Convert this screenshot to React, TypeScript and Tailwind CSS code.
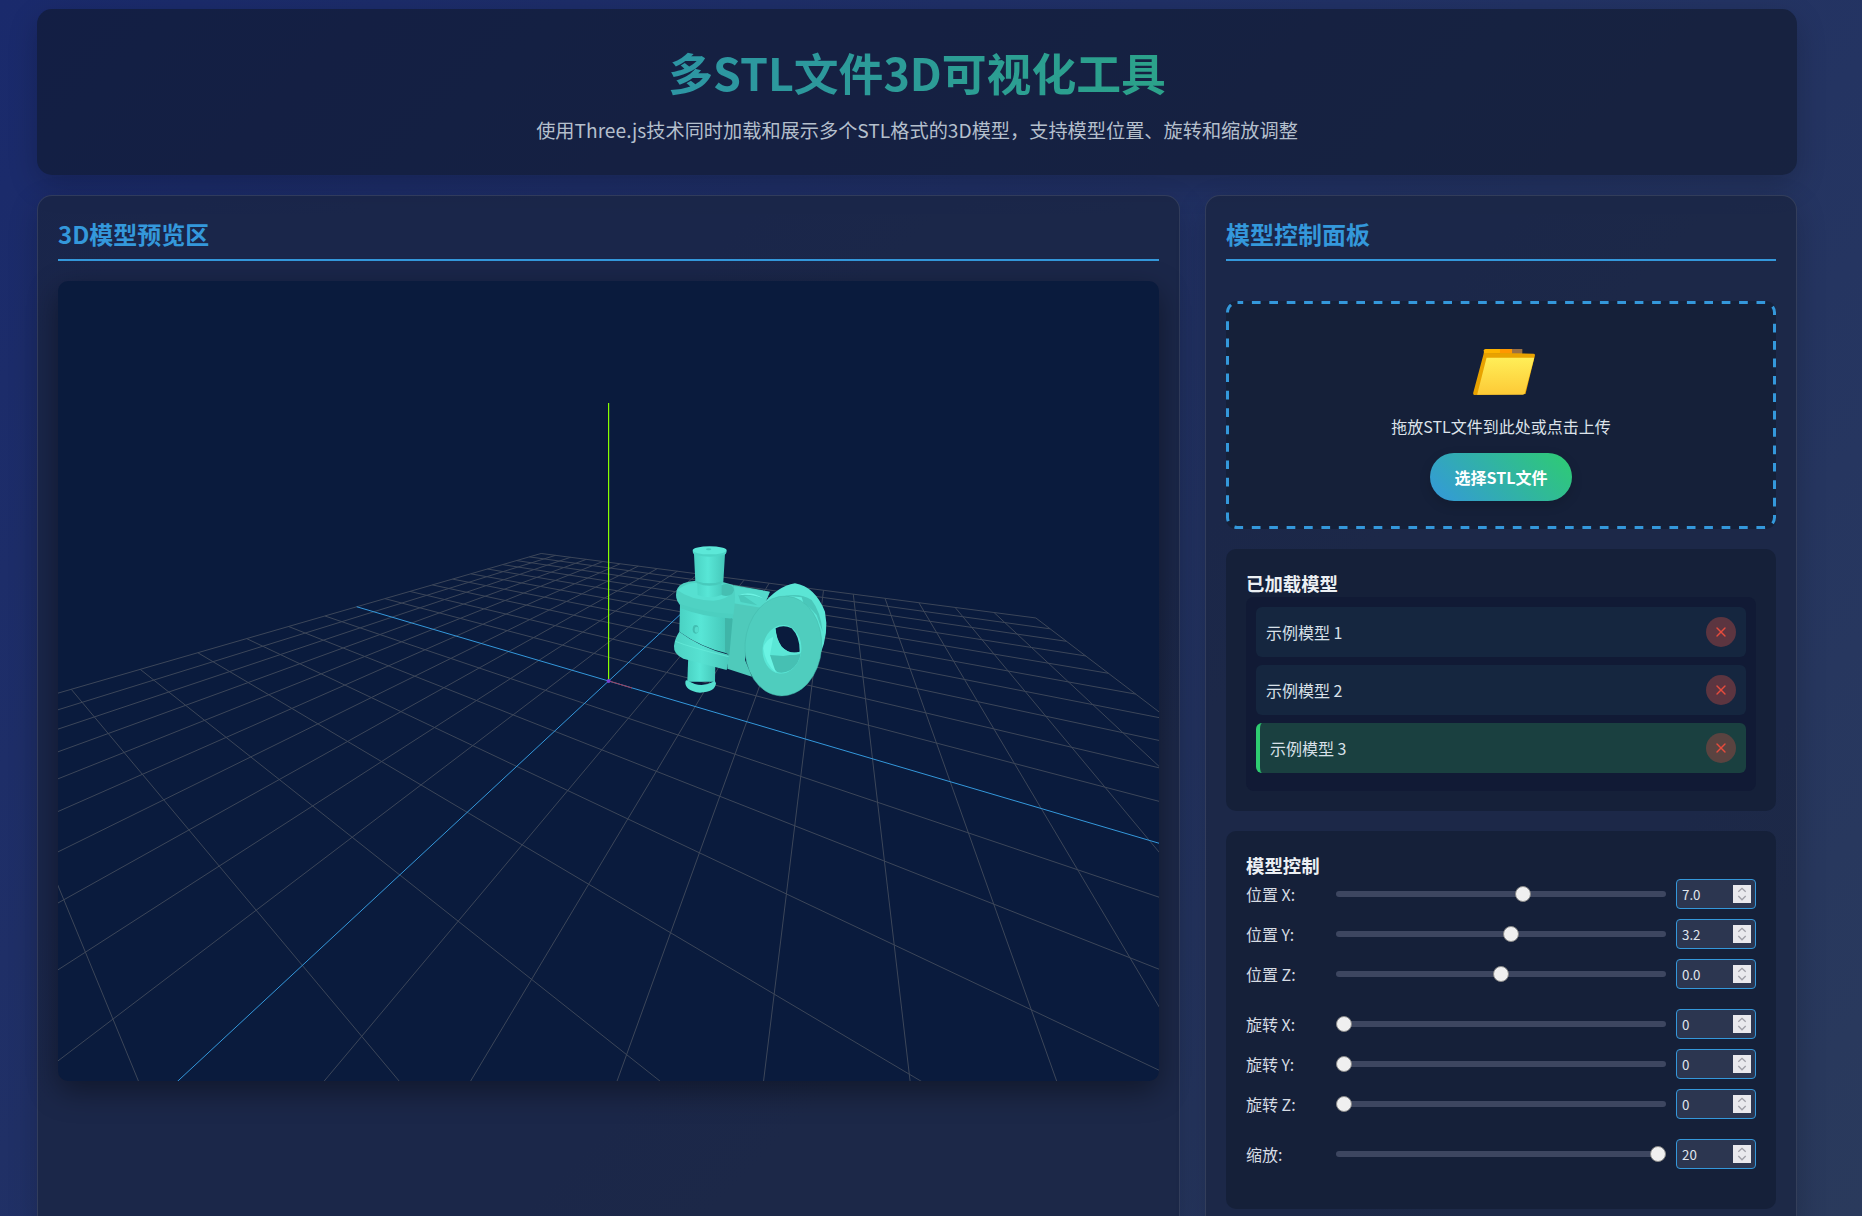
import React from 'react';
import { X } from 'lucide-react';

// ground plane of the preview, projected from the reference's vanishing points
const VA = [-114, 468];
const VB = [838.5, 467.5];
const O = [608.6, 681];
const A = -0.535;
const B = -0.952;
const OFFSET_X = 58;
const OFFSET_Y = 281;

const project = (u: number, v: number) => {
  const w = 1 + A * u + B * v;
  const x = (A * u * VA[0] + B * v * VB[0] + O[0]) / w;
  const y = (A * u * VA[1] + B * v * VB[1] + O[1]) / w;
  return [x - OFFSET_X, y - OFFSET_Y];
};

const weight = (u: number, v: number) => 1 + A * u + B * v;

// cut a grid line where it goes behind the camera
const gridLine = (u0: number, v0: number, u1: number, v1: number) => {
  let a = [u0, v0];
  let b = [u1, v1];
  const eps = 0.02;
  const wa = weight(a[0], a[1]);
  const wb = weight(b[0], b[1]);
  if (wa < eps && wb < eps) return null;
  if (wa < eps) {
    const t = (eps - wa) / (wb - wa);
    a = [a[0] + (b[0] - a[0]) * t, a[1] + (b[1] - a[1]) * t];
  }
  if (wb < eps) {
    const t = (eps - wb) / (wa - wb);
    b = [b[0] + (a[0] - b[0]) * t, b[1] + (a[1] - b[1]) * t];
  }
  const p = project(a[0], a[1]);
  const q = project(b[0], b[1]);
  return { x1: p[0], y1: p[1], x2: q[0], y2: q[1] };
};

const divisions = Array.from({ length: 21 }, (_, i) => -1 + i / 10);

// traced at 3x, origin at 670,540 of the page
const Model = () => (
  <g transform={`translate(${670 - OFFSET_X} ${540 - OFFSET_Y}) scale(0.3333)`}>
    <defs>
      <linearGradient id="shaft" x1="0" y1="0" x2="1" y2="0">
        <stop offset="0" stopColor="#4ad2c3" />
        <stop offset="0.45" stopColor="#58e6d6" />
        <stop offset="1" stopColor="#45c7b9" />
      </linearGradient>
      <linearGradient id="body" x1="0" y1="0" x2="1" y2="0">
        <stop offset="0" stopColor="#4dd2c3" />
        <stop offset="0.5" stopColor="#57e2d2" />
        <stop offset="1" stopColor="#4ac9bb" />
      </linearGradient>
    </defs>
    {/* lower pin */}
    <path d="M55 345 L52 425 L135 425 L136 370 Z" fill="url(#shaft)" />
    <path d="M46 425 Q44 452 90 458 Q136 456 138 430 Q134 418 130 425 Q92 446 54 422 Q48 418 46 425 Z" fill="#55e0d0" />
    {/* arm running to the disc */}
    <path d="M190 135 L300 155 L280 205 L235 270 L225 360 L246 410 L172 386 L185 235 Z" fill="#4fcabb" />
    <path d="M190 138 L298 156 L278 204 L190 190 Z" fill="#54dacb" />
    <path d="M205 166 Q240 150 282 176 Q250 164 222 168 L262 196 L212 186 Z" fill="#4ac9bb" />
    <path d="M205 166 Q240 150 282 176 Q240 160 205 166 Z" fill="#6cf3e3" />
    {/* clevis, upper ear */}
    <path d="M18 165 Q18 140 40 130 Q58 122 80 122 L150 124 L190 135 Q200 160 190 225 Q110 222 35 200 Q18 185 18 165 Z" fill="#4fd2c3" />
    <path d="M22 150 Q50 128 80 128 L150 130 Q185 138 192 155 Q170 178 130 182 Q60 180 22 150 Z" fill="#56e0d1" />
    <ellipse cx="168" cy="150" rx="24" ry="18" fill="#45bfb2" />
    {/* upper pin */}
    <path d="M72 42 L76 125 L82 130 L83 165 Q118 178 155 165 L155 130 L160 125 L165 42 Z" fill="url(#shaft)" />
    <path d="M76 122 Q118 138 160 122 L156 130 Q118 145 82 130 Z" fill="#48cabc" />
    <path d="M68 32 Q68 44 80 46 Q118 54 158 46 Q170 44 170 32 Z" fill="#4cd4c5" />
    <ellipse cx="119" cy="31" rx="51" ry="12" fill="#5ce8d8" />
    <ellipse cx="116" cy="28" rx="8" ry="3" fill="#45c9bb" />
    {/* clevis, barrel between the ears */}
    <path d="M30 195 Q100 225 172 228 L170 340 Q90 320 28 275 Z" fill="url(#shaft)" />
    <path d="M165 228 L188 236 L178 346 L165 336 Z" fill="#3fb5a8" />
    <path d="M30 192 Q100 218 190 222 L188 236 Q100 232 30 204 Z" fill="#4ccfc0" />
    <ellipse cx="77" cy="268" rx="9" ry="13" fill="#42beb1" />
    <ellipse cx="80" cy="269" rx="6" ry="9" fill="#55dccd" />
    {/* clevis, lower ear */}
    <path d="M28 275 Q90 322 176 344 L178 352 L170 390 L40 356 Q10 342 12 318 Q14 296 28 275 Z" fill="url(#body)" />
    <path d="M16 304 Q60 322 176 350" fill="none" stroke="#68eedd" strokeWidth="2" />
    {/* disc */}
    <path d="M278 195 Q320 140 375 130 Q435 140 465 215 Q478 280 450 345 L400 300 Z" fill="#5be5d5" />
    <path d="M345 168 Q390 158 425 180 Q452 215 458 275 L440 225 Q395 172 345 170 Z" fill="#4ac7ba" />
    <path d="M355 168 L395 172 L404 200 L372 186 Z" fill="#62ecdc" />
    <ellipse cx="340" cy="318" rx="115" ry="150" transform="rotate(4 340 318)" fill="#4fcdbe" stroke="#44b9ac" strokeWidth="1.5" />
    {/* hole */}
    <ellipse cx="336" cy="328" rx="58" ry="73" transform="rotate(6 336 328)" fill="#5ae6d6" />
    <path d="M300 345 L340 348 L392 340 Q388 372 362 390 Q340 402 322 396 Q300 378 300 345 Z" fill="#46c0b3" />
    <path d="M280 325 Q285 370 318 398 L300 345 L310 290 Q285 300 280 325 Z" fill="#6af3e3" />
    <path d="M317 265 Q340 253 365 265 Q390 290 389 335 Q360 345 335 320 Q318 295 317 265 Z" fill="#0a1b3d" />
    <path d="M317 268 Q318 298 335 320 Q360 346 389 335 L390 342 Q350 352 322 326 Q306 296 317 268 Z" fill="#5ce6d6" />
  </g>
);

const Preview = () => (
  <div className="h-[800px] rounded-[10px] overflow-hidden bg-[#0a1b3d] shadow-[0_10px_30px_rgba(0,0,0,0.4)]">
    <svg width="1102" height="800" viewBox="0 0 1102 800" className="block">
      <g stroke="#3c4659" strokeWidth="1">
        {divisions.map((d, i) => {
          if (i === 10) return null;
          const one = gridLine(d, -1, d, 1);
          const two = gridLine(-1, d, 1, d);
          return (
            <g key={i}>
              {one && <line {...one} />}
              {two && <line {...two} />}
            </g>
          );
        })}
      </g>
      <g stroke="#3498db" strokeWidth="1">
        <line {...gridLine(0, -1, 0, 1)!} />
        <line {...gridLine(-1, 0, 1, 0)!} />
      </g>
      <line x1="551" y1="400" x2="574" y2="407" stroke="#a33a55" strokeWidth="1" />
      <line x1="550.6" y1="400" x2="550.6" y2="122" stroke="#88ff00" strokeWidth="1.2" />
      <circle cx="550.6" cy="400" r="2" fill="#7a3fd0" />
      <Model />
    </svg>
  </div>
);

const FolderIcon = () => (
  <svg width="62" height="46" viewBox="68 58 184 137" className="block ml-[5px]">
    <defs>
      <linearGradient id="sheet" x1="0" y1="0" x2="0" y2="1">
        <stop offset="0" stopColor="#ffee58" />
        <stop offset="1" stopColor="#fdca36" />
      </linearGradient>
    </defs>
    <path d="M100 62 Q101 58 106 58 L214 58 L214 72 L100 72 Z" fill="#fdb400" />
    <rect x="148" y="58" width="36" height="14" fill="#ff9800" />
    <rect x="184" y="58" width="30" height="14" fill="#9a7044" />
    <path d="M100 70 L248 72 Q253 72 252 78 L224 192 L70 195 L68 190 Z" fill="#e8a200" />
    <path d="M108 84 L250 84 L222 190 Q221 194 216 194 L80 194 Z" fill="url(#sheet)" />
  </svg>
);

const models = [
  { name: '示例模型 1', active: false },
  { name: '示例模型 2', active: false },
  { name: '示例模型 3', active: true },
];

const controlGroups = [
  [
    { label: '位置 X:', min: -50, max: 50, step: 0.1, value: '7.0' },
    { label: '位置 Y:', min: -50, max: 50, step: 0.1, value: '3.2' },
    { label: '位置 Z:', min: -50, max: 50, step: 0.1, value: '0.0' },
  ],
  [
    { label: '旋转 X:', min: 0, max: 360, step: 1, value: '0' },
    { label: '旋转 Y:', min: 0, max: 360, step: 1, value: '0' },
    { label: '旋转 Z:', min: 0, max: 360, step: 1, value: '0' },
  ],
  [{ label: '缩放:', min: 0, max: 20, step: 1, value: '20' }],
];

const ControlRow = ({ label, min, max, step, value }: { label: string; min: number; max: number; step: number; value: string }) => (
  <div className="flex items-center h-[30px] mb-[10px]">
    <span className="w-[90px] text-[16px] text-[#d5dbe3]">{label}</span>
    <input
      type="range"
      min={min}
      max={max}
      step={step}
      defaultValue={value}
      className="w-[330px] h-[6px] rounded-[3px] bg-[#3d4660] appearance-none [&::-webkit-slider-thumb]:appearance-none [&::-webkit-slider-thumb]:w-[16px] [&::-webkit-slider-thumb]:h-[16px] [&::-webkit-slider-thumb]:rounded-full [&::-webkit-slider-thumb]:bg-[#f0f0f0] [&::-webkit-slider-thumb]:border [&::-webkit-slider-thumb]:border-[#888]"
    />
    <div className="relative ml-[10px]">
      <input
        type="number"
        min={min}
        max={max}
        step={step}
        defaultValue={value}
        className="block w-[80px] h-[30px] px-[5px] rounded-[4px] border border-[#3498db] bg-[#2c3650] text-[13.33px] text-[#e0e6ee] appearance-none [&::-webkit-inner-spin-button]:appearance-none"
      />
      {/* spinner drawn by hand, the native one has different arrows */}
      <svg width="18" height="18" viewBox="0 0 18 18" className="absolute top-[6px] right-[5px] bg-[#e9e9ed]">
        <path d="M5.3 6.7 L9 3.3 L12.7 6.7 M5.3 11 L9 14.8 L12.7 11" fill="none" stroke="#a0a0a8" strokeWidth="1.3" />
      </svg>
    </div>
  </div>
);

export default function App() {
  return (
    <div
      className="h-screen overflow-hidden pt-[9px] pl-[37px] bg-[linear-gradient(135deg,#1a2a6c,#2a3a5c)] text-white"
      style={{ fontFamily: '"Noto Sans CJK SC", "Noto Sans", sans-serif' }}
    >
      <div className="w-[1760px]">
        <header className="h-[166px] pt-[30px] rounded-[15px] bg-[rgba(15,23,42,0.6)] shadow-[0_10px_30px_rgba(0,0,0,0.2)] text-center">
          <h1 className="h-[66px] leading-[66px] text-[44.8px] font-bold text-transparent bg-clip-text bg-[linear-gradient(90deg,#3498db,#2ecc71)] opacity-85">
            多STL文件3D可视化工具
          </h1>
          <p className="mt-[12px] leading-[26px] text-[19.2px] text-[#b4bfcc]">
            使用Three.js技术同时加载和展示多个STL格式的3D模型，支持模型位置、旋转和缩放调整
          </p>
        </header>

        <div className="mt-[20px] grid grid-cols-[1143px_592px] gap-[25px]">
          <section className="rounded-[15px] border border-white/10 p-[20px] bg-[rgba(26,36,64,0.75)] shadow-[0_10px_30px_rgba(0,0,0,0.2)]">
            <h2 className="pt-[2px] leading-[31px] pb-[10px] border-b-2 border-[#3498db] text-[24px] font-bold text-[#3498db]">3D模型预览区</h2>
            <div className="mt-[20px]">
              <Preview />
            </div>
          </section>

          <section className="rounded-[15px] border border-white/10 p-[20px] bg-[rgba(26,36,64,0.75)] shadow-[0_10px_30px_rgba(0,0,0,0.2)]">
            <h2 className="pt-[2px] leading-[31px] pb-[10px] border-b-2 border-[#3498db] text-[24px] font-bold text-[#3498db]">模型控制面板</h2>

            <div className="relative mt-[40px] h-[228px] flex flex-col items-center pt-[48px] rounded-[10px] bg-[#152039]">
              {/* dash pitch of the reference is longer than the browser's dashed border */}
              <svg className="absolute inset-0 w-full h-full" fill="none">
                <rect x="1.5" y="1.5" width="547" height="225" rx="10" stroke="#3498db" strokeWidth="3" strokeDasharray="8.7 8.7" strokeDashoffset="3" />
              </svg>
              <FolderIcon />
              <p className="mt-[20px] leading-[22px] text-[16px] text-[#dde3ea]">拖放STL文件到此处或点击上传</p>
              <button className="relative mt-[16px] w-[142px] h-[48px] rounded-full bg-[linear-gradient(45deg,#3498db,#2ecc71)] text-[16px] font-bold text-white shadow-[0_4px_12px_rgba(0,0,0,0.15)]">
                选择STL文件
              </button>
            </div>

            <div className="mt-[20px] h-[262px] rounded-[10px] bg-[#152039] px-[20px] pt-[21px]">
              <h3 className="leading-[27px] text-[18.4px] font-bold text-[#ecf0f4]">已加载模型</h3>
              <ul className="h-[194px] rounded-[8px] bg-[#111a35] p-[10px] flex flex-col gap-[8px]">
                {models.map((m) => (
                  <li
                    key={m.name}
                    className={
                      m.active
                        ? 'h-[50px] flex items-center justify-between rounded-[6px] pl-[10px] pr-[10px] bg-[#1a4040] border-l-4 border-[#2ecc71]'
                        : 'h-[50px] flex items-center justify-between rounded-[6px] pl-[10px] pr-[10px] bg-[#15263f]'
                    }
                  >
                    <span className="text-[16px] text-[#d8e0e8]">{m.name}</span>
                    <button className={m.active ? 'w-[30px] h-[30px] rounded-full flex items-center justify-center bg-[#5a4340] text-[#e74c3c]' : 'w-[30px] h-[30px] rounded-full flex items-center justify-center bg-[#5c3540] text-[#e74c3c]'}>
                      <X size={16} />
                    </button>
                  </li>
                ))}
              </ul>
            </div>

            <div className="mt-[20px] h-[378px] rounded-[10px] bg-[#152039] px-[20px] pt-[21px]">
              <h3 className="leading-[27px] text-[18.4px] font-bold text-[#ecf0f4]">模型控制</h3>
              {controlGroups.map((group, g) => (
                <div key={g} className="pb-[10px]">
                  {group.map((c) => (
                    <ControlRow key={c.label} {...c} />
                  ))}
                </div>
              ))}
            </div>
          </section>
        </div>
      </div>
    </div>
  );
}
